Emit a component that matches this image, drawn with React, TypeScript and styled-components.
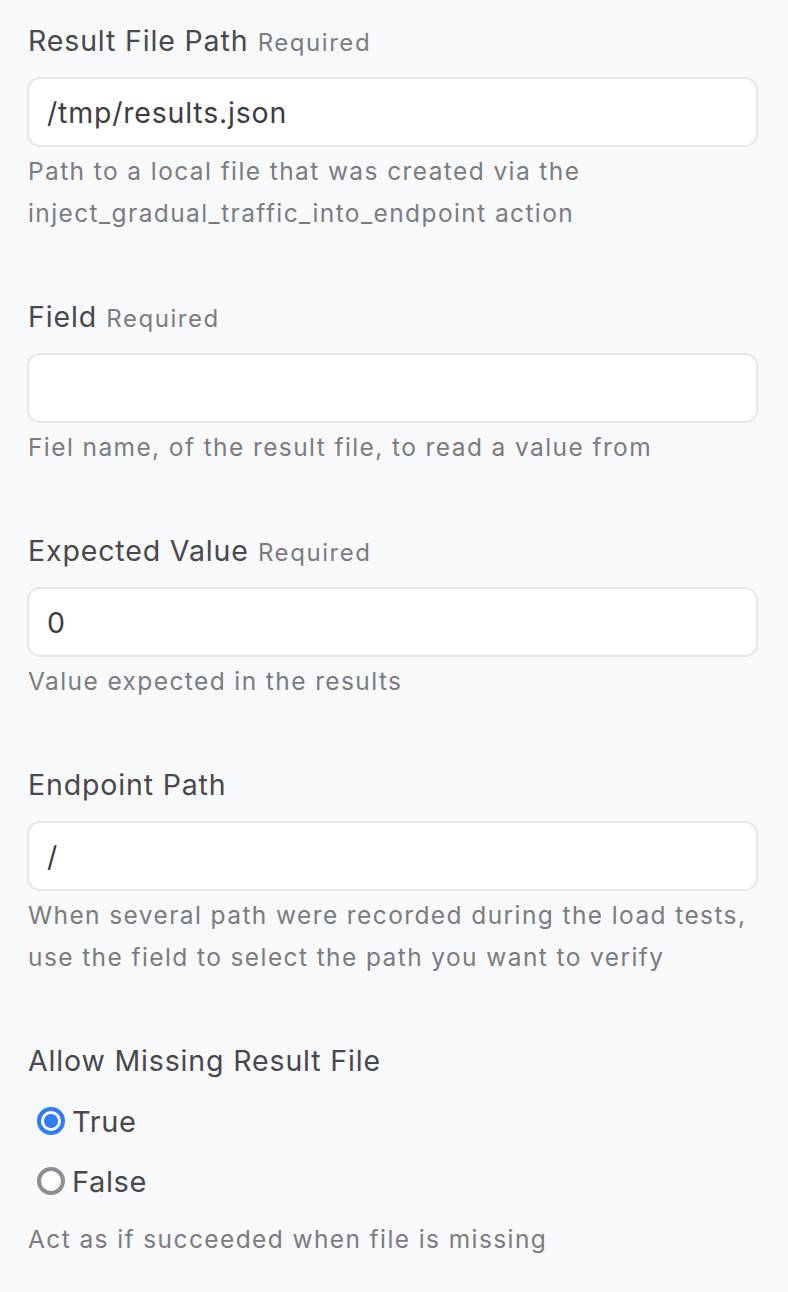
import React from 'react';
import styled, { createGlobalStyle } from 'styled-components';

const GlobalStyle = createGlobalStyle`
  html, body {
    margin: 0;
    padding: 0;
    background: #f8f9fb;
  }
  body {
    font-family: Inter, "Noto Sans", "Liberation Sans", sans-serif;
  }
`;

const Page = styled.div`
  padding: 21px 30px 30px 27px;
  display: flex;
  flex-direction: column;
  gap: 63px;
`;

const Section = styled.div`
  display: flex;
  flex-direction: column;
`;

const Label = styled.div`
  height: 40px;
  font-size: 28.5px;
  line-height: 40px;
  letter-spacing: 0.85px;
  color: #48484d;
  padding-left: 1px;
  margin-bottom: 16px;
  white-space: nowrap;
`;

const Required = styled.span`
  font-size: 24px;
  line-height: 1;
  letter-spacing: 1.55px;
  color: #7c7c82;
  margin-left: 1px;
`;

const Input = styled.input`
  box-sizing: border-box;
  width: 100%;
  height: 70px;
  border: 2px solid #e6e7ea;
  border-radius: 13px;
  background: #ffffff;
  padding: 0 18px;
  font-family: inherit;
  font-size: 28.5px;
  letter-spacing: 0.8px;
  color: #3d3d42;
  outline: none;
`;

const Help = styled.div<{ $gap?: number }>`
  margin-top: ${(p) => p.$gap ?? 3}px;
  padding-left: 1px;
  font-size: 24.5px;
  line-height: 42px;
  letter-spacing: 1.4px;
  color: #7a7c82;
  white-space: nowrap;
`;

const RadioGroup = styled.div`
  display: flex;
  flex-direction: column;
  margin-top: -6px;
  padding-left: 10px;
`;

const RadioRow = styled.label`
  display: flex;
  align-items: center;
  height: 60px;
  gap: 7px;
  font-size: 29px;
  letter-spacing: 0.6px;
  color: #48484d;
`;

const Dot = styled.span<{ $checked: boolean }>`
  box-sizing: border-box;
  flex: none;
  width: 28px;
  height: 28px;
  border-radius: 50%;
  border: 4px solid ${(p) => (p.$checked ? '#2f7cf6' : '#8e8f96')};
  background: ${(p) =>
    p.$checked ? 'radial-gradient(circle, #2f7cf6 0 6.5px, #ffffff 7.5px)' : '#ffffff'};
`;

type FieldProps = {
  label: string;
  required?: boolean;
  value: string;
  help: React.ReactNode;
};

const Field = ({ label, required, value, help }: FieldProps) => (
  <Section>
    <Label>
      {label}
      {required && <Required> Required</Required>}
    </Label>
    <Input defaultValue={value} />
    <Help>{help}</Help>
  </Section>
);

export default function App() {
  return (
    <>
      <GlobalStyle />
      <Page>
        <Field
          label="Result File Path"
          required
          value="/tmp/results.json"
          help={
            <>
              Path to a local file that was created via the
              <br />
              inject_gradual_traffic_into_endpoint action
            </>
          }
        />
        <Field label="Field" required value="" help="Fiel name, of the result file, to read a value from" />
        <Field label="Expected Value" required value="0" help="Value expected in the results" />
        <Field
          label="Endpoint Path"
          value="/"
          help={
            <>
              When several path were recorded during the load tests,
              <br />
              use the field to select the path you want to verify
            </>
          }
        />
        <Section>
          <Label>Allow Missing Result File</Label>
          <RadioGroup>
            <RadioRow>
              <Dot $checked />
              True
            </RadioRow>
            <RadioRow>
              <Dot $checked={false} />
              False
            </RadioRow>
          </RadioGroup>
          <Help $gap={7}>Act as if succeeded when file is missing</Help>
        </Section>
      </Page>
    </>
  );
}
